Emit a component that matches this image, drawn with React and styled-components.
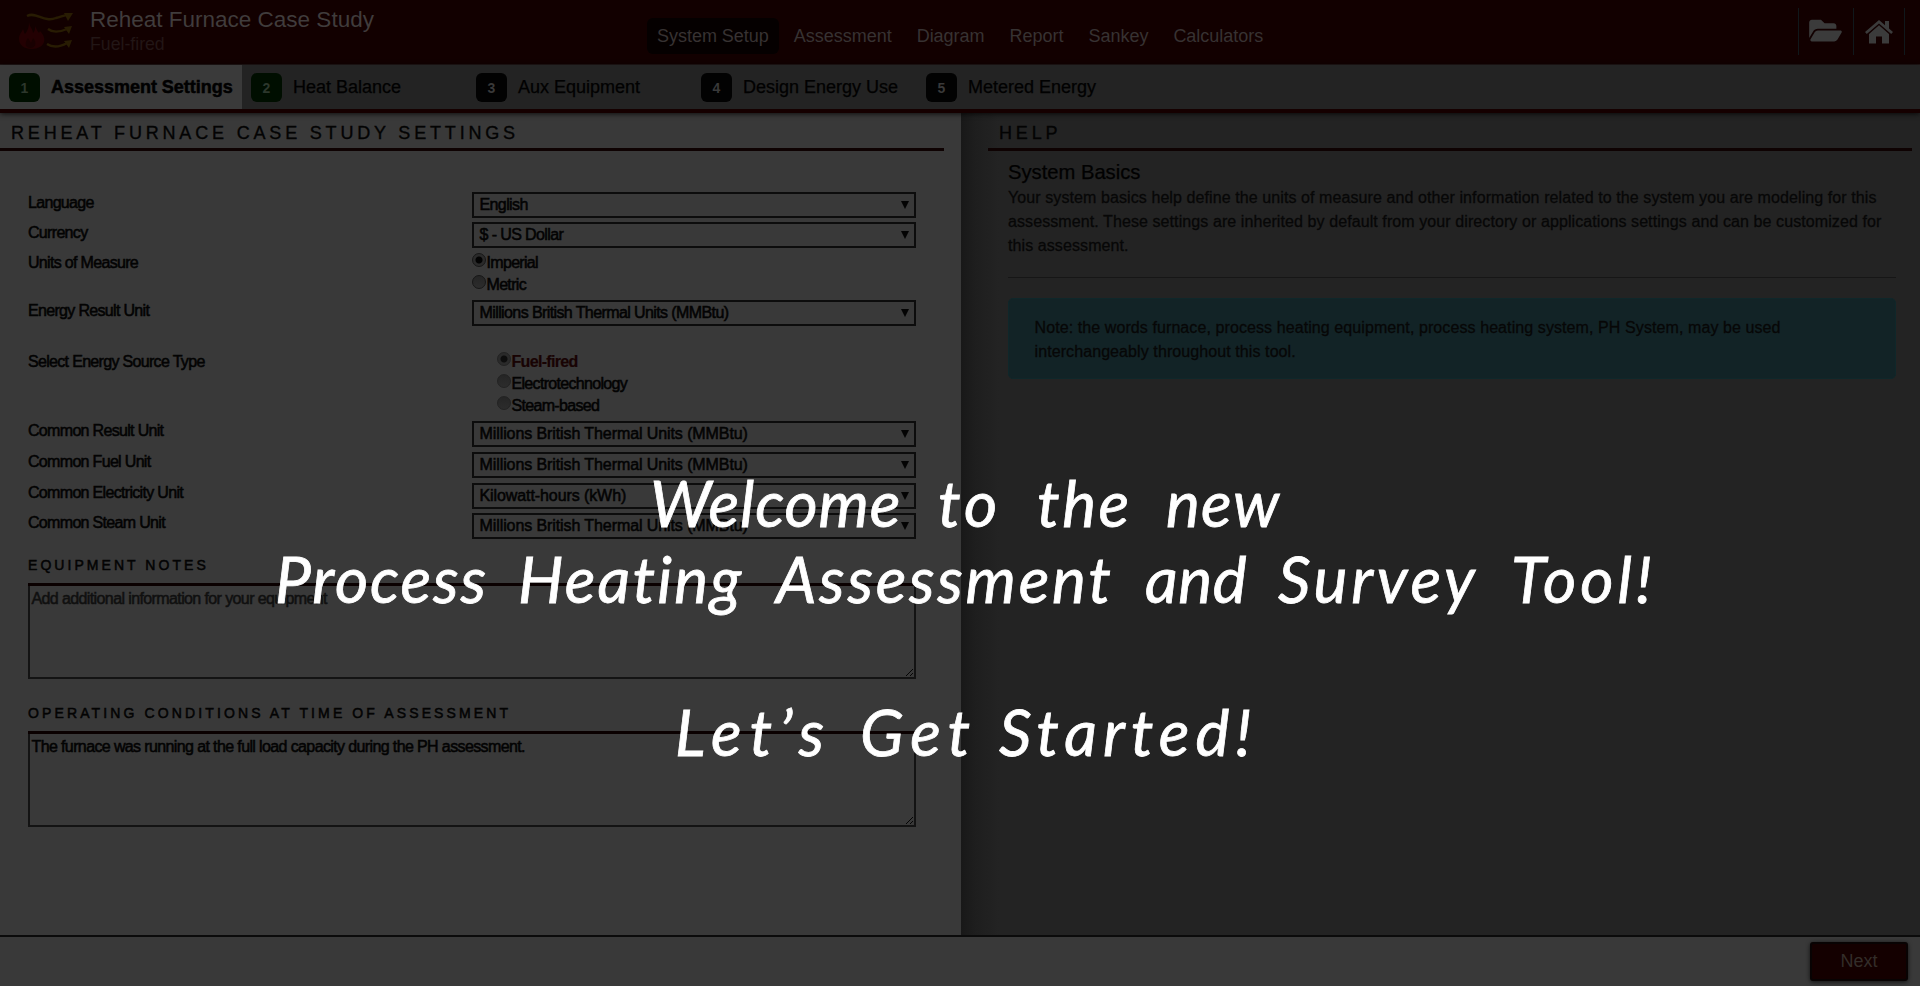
import React from "react";
import styled, { createGlobalStyle, css } from "styled-components";
import { FaFolderOpen } from "react-icons/fa";

const Global = createGlobalStyle`
  * { box-sizing: border-box; }
  body { margin: 0; background: #393939; font-family: "Liberation Sans", Arial, sans-serif; }
`;

const ink = "#030303";
const maroon = "#120000";

const Page = styled.div`
  position: relative;
  width: 1920px;
  height: 986px;
  display: flex;
  flex-direction: column;
  overflow: hidden;
  background: #393939;
  color: ${ink};
`;

/* ---------- header ---------- */
const Header = styled.header`
  height: 65px;
  flex: none;
  display: grid;
  grid-template-columns: 647px 1fr auto;
  background: ${maroon};
  border-bottom: 1px solid #201616;
`;
const Brand = styled.div`
  display: flex;
  padding-left: 17px;
`;
const Titles = styled.div`
  padding: 7px 0 0 16px;
`;
const Title = styled.div`
  font-size: 22.5px;
  line-height: 25px;
  color: #403c3c;
`;
const Subtitle = styled.div`
  font-size: 17.7px;
  line-height: 24px;
  color: #221616;
`;
const Nav = styled.nav`
  display: flex;
  gap: 5px;
  padding-top: 18px;
`;
const NavItem = styled.a`
  height: 36px;
  padding: 0 10px;
  border-radius: 6px;
  font-size: 18px;
  line-height: 37px;
  letter-spacing: -0.02px;
  color: #373232;
  background: ${(p) => (p.$on ? "#050000" : "transparent")};
`;
const HeaderTools = styled.div`
  display: flex;
  height: 47px;
  margin: 8px 15px 0 0;
`;
const Tool = styled.div`
  width: ${(p) => p.$w}px;
  border-left: 1px solid #10181b;
  display: flex;
  justify-content: center;
  padding: ${(p) => p.$top}px 2px 0 0;
  color: #3b3b3b;
  &:last-child { border-right: 1px solid #10181b; padding-right: 0; }
`;

/* ---------- step tabs ---------- */
const Steps = styled.div`
  position: relative;
  height: 48px;
  flex: none;
  display: flex;
  background: #232323;
  border-bottom: 4px solid #150000;
  box-shadow: 0 1px 5px rgba(0, 0, 0, 0.75);
`;
const Step = styled.div`
  width: ${(p) => (p.$on ? 242 : 225)}px;
  display: flex;
  align-items: center;
  gap: 11px;
  padding: 1px 0 0 9px;
  white-space: nowrap;
  font-size: 18px;
  font-weight: ${(p) => (p.$on ? 700 : 400)};
  letter-spacing: ${(p) => (p.$on ? "-0.02px" : 0)};
  color: #010101;
  -webkit-text-stroke: ${(p) => (p.$on ? 0.5 : 0.25)}px #010101;
  background: ${(p) => (p.$on ? "#3a3a3a" : "transparent")};
`;
const Badge = styled.span`
  width: 31px;
  height: 29px;
  flex: none;
  border-radius: 6px;
  display: grid;
  place-items: center;
  font-size: 14px;
  font-weight: 700;
  -webkit-text-stroke: 0;
  color: ${(p) => (p.$done ? "#2c372c" : "#393939")};
  background: ${(p) => (p.$done ? "#000e00" : "#020202")};
`;

/* ---------- body ---------- */
const Body = styled.main`
  flex: 1;
  display: grid;
  grid-template-columns: 961px 1fr;
`;
const Settings = styled.section`
  background: #393939;
`;
const Help = styled.aside`
  padding-left: 27px;
  background: linear-gradient(90deg, #181818 0, #1e1e1e 14px, #232323 38px);
`;
const PanelTitle = styled.h2`
  margin: 0 ${(p) => p.$right}px 0 0;
  height: 38px;
  padding: 10px 0 0 11px;
  border-bottom: 3px solid #0e0202;
  font-size: 18px;
  line-height: 21px;
  font-weight: 400;
  letter-spacing: 3.82px;
  color: ${ink};
  -webkit-text-stroke: 0.35px ${ink};
  white-space: nowrap;
`;
const Form = styled.div`
  padding: 41px 0 0 28px;
`;
const Row = styled.div`
  display: grid;
  grid-template-columns: 444px 444px;
  height: ${(p) => p.$h}px;
`;
const crisp = css`
  font-size: 16px;
  -webkit-text-stroke: 0.55px ${ink};
`;
const Label = styled.label`
  ${crisp}
  line-height: 18px;
  padding-top: ${(p) => p.$top || 2}px;
  letter-spacing: -0.68px;
`;
const Select = styled.div`
  ${crisp}
  height: 26px;
  border: 2px solid #0c0c0c;
  display: flex;
  align-items: center;
  justify-content: space-between;
  padding: 0 5px ${(p) => (p.$loose ? 0 : 1)}px 5.5px;
  letter-spacing: ${(p) => (p.$loose ? "-0.09px" : "-0.6px")};
`;
const Arrow = styled.i`
  border: solid transparent;
  border-width: 8px 4px 0;
  border-top-color: #030303;
`;
const Options = styled.div`
  padding-left: ${(p) => p.$indent || 0}px;
  padding-top: ${(p) => p.$top || 0}px;
`;
const Option = styled.div`
  ${crisp}
  height: 21.8px;
  display: flex;
  gap: 0.5px;
  line-height: 21px;
  letter-spacing: -0.68px;
  font-weight: ${(p) => (p.$hot ? 700 : 400)};
  color: ${(p) => (p.$hot ? "#180303" : ink)};
  -webkit-text-stroke: ${(p) => (p.$hot ? "0.2px #180303" : `0.55px ${ink}`)};
`;
const Dot = styled.span`
  width: 14px;
  height: 14px;
  margin-top: 1px;
  flex: none;
  border-radius: 50%;
  border: 1px solid ${(p) => (p.$dim ? "#222" : "#161616")};
  background: ${(p) =>
    p.$checked
      ? `radial-gradient(circle, ${p.$dim ? "#0d0d0d" : "#020202"} 0 3px, #2a2a2a 4px)`
      : "linear-gradient(#252525, #2c2c2c)"};
`;
const NoteTitle = styled.h3`
  margin: 0 0 0 28px;
  padding-top: ${(p) => p.$top}px;
  width: 888px;
  border-bottom: 3px solid #0a0000;
  font-size: 14px;
  line-height: 16px;
  padding-bottom: 10px;
  font-weight: 400;
  letter-spacing: ${(p) => p.$ls}px;
  -webkit-text-stroke: 0.5px ${ink};
`;
const NoteBox = styled.div`
  ${crisp}
  position: relative;
  width: 888px;
  height: 93px;
  margin-left: 28px;
  border: 1px solid #131313;
  border-width: 0 2px 2px;
  padding: 4px 0 0 1.5px;
  line-height: 18px;
  letter-spacing: ${(p) => p.$ls}px;
  color: ${(p) => (p.$hint ? "#101010" : ink)};
  -webkit-text-stroke-color: ${(p) => (p.$hint ? "#101010" : ink)};
`;
const Grip = styled.svg`
  position: absolute;
  right: 0;
  bottom: 0;
`;

/* ---------- help ---------- */
const HelpBody = styled.div`
  margin: 0 24px 0 20px;
`;
const HelpTitle = styled.h3`
  margin: 0;
  padding-top: 9px;
  font-size: 20.2px;
  line-height: 25px;
  height: 35px;
  font-weight: 400;
  color: #010101;
  -webkit-text-stroke: 0.25px #010101;
`;
const Copy = styled.p`
  margin: 0;
  font-size: 16px;
  line-height: 24px;
  letter-spacing: 0.09px;
  color: #070707;
  -webkit-text-stroke: 0.3px #070707;
  white-space: nowrap;
`;
const Divider = styled.hr`
  margin: 19px 0 20px;
  border: 0;
  border-top: 1px solid #161616;
`;
const Note = styled.div`
  height: 81px;
  padding: 17px 25.5px;
  border: 1px solid #0f272a;
  border-radius: 5px;
  background: #122326;
`;

/* ---------- footer ---------- */
const Footer = styled.footer`
  height: 51px;
  flex: none;
  display: flex;
  justify-content: flex-end;
  padding: 5px 12px 0 0;
  border-top: 2px solid #0b0b0b;
  background: #393939;
`;
const NextButton = styled.button`
  width: 98px;
  height: 39px;
  padding: 0;
  border: 2px solid #080303;
  border-radius: 3px;
  background: #140000;
  color: #332d29;
  font: 18px "Liberation Sans", sans-serif;
  box-shadow: 0 1px 4px rgba(0, 0, 0, 0.7);
`;

/* ---------- welcome message ---------- */
const Welcome = styled.div`
  position: absolute;
  inset: 0;
  padding-top: 465px;
  color: #fff;
  font: italic 400 64px/76px Lato, "Open Sans", sans-serif;
  font-variant-ligatures: none;
  -webkit-text-stroke: 0.8px #fff;
`;
const Line = styled.div`
  display: flex;
  height: ${(p) => p.$h}px;
  padding-left: ${(p) => p.$x}px;
  white-space: nowrap;
`;
const Word = styled.span`
  width: ${(p) => p.$w}px;
  flex: none;
  letter-spacing: ${(p) => p.$ls || 0}px;
`;

const Logo = () => (
  <svg width="57" height="56" viewBox="17 0 57 56" fill="none">
    <path d="M29 22c1 6 4 7 4 11 2-2 2-4 2-7 2 4 3 6 4 7l1-2c4 4 5 8 4 11-1 4-6 7-12 7-8 0-13-4-13-10 0-5 3-7 4-10 1 2 1 4 2 5 3-4 4-7 4-12z" fill="#230002" />
    <path d="M28 38c1 2 2 3 3 5l2-5c3 3 4 9-2 10-7 0-6-6-3-10z" fill="#190001" />
    <g stroke="#281c03" strokeWidth="2.4">
      <path d="M27 16c9-5 17 7 29 2 5-1 8-3 12-3" />
      <path d="M48 29c5 4 12 3 19 0" />
      <path d="M47 44c6 4 13 3 20-1" />
    </g>
    <g fill="#281c03">
      <path d="M64 13l9 0-5 8z" />
      <path d="M64 27l8-1-3 8z" />
      <path d="M64 41l8-1-3 8z" />
    </g>
  </svg>
);

const Home = () => (
  <svg width="28" height="24" viewBox="0 0 28 24" fill="currentColor">
    <path d="M14 0L0 12l1.8 2L14 3.5 26.2 14l1.8-2-4-3.5V1h-4v4.2z" />
    <path d="M14 5.3L4 14v9.5h7v-7h6v7h7V14z" />
  </svg>
);

const navItems = ["System Setup", "Assessment", "Diagram", "Report", "Sankey", "Calculators"];
const steps = ["Assessment Settings", "Heat Balance", "Aux Equipment", "Design Energy Use", "Metered Energy"];
const mmbtu = "Millions British Thermal Units (MMBtu)";
const commonUnits = [
  ["Common Result Unit", mmbtu],
  ["Common Fuel Unit", mmbtu],
  ["Common Electricity Unit", "Kilowatt-hours (kWh)"],
  ["Common Steam Unit", mmbtu],
];

const Picker = ({ children, loose }) => (
  <Select $loose={loose}>
    {children}
    <Arrow />
  </Select>
);

const Notes = ({ children, ...rest }) => (
  <NoteBox {...rest}>
    {children}
    <Grip width="9" height="9" viewBox="0 0 9 9" stroke="#050505">
      <path d="M1 8L8 1M5 8L8 5" />
    </Grip>
  </NoteBox>
);

/* each word: text, advance to the next word, letter spacing */
const messages = [
  { x: 650, h: 76, words: [["Welcome", 288, 0.8], ["to", 99, 4], ["the", 129, 2.5], ["new", 120, 1.2]] },
  { x: 275, h: 153, words: [["Process", 243, 1.9], ["Heating", 258, 2.2], ["Assessment", 369, 2.7], ["and", 133, 0.6], ["Survey", 233, 3.7], ["Tool!", 150, 4]] },
  { x: 675, h: 76, words: [["Let’s", 185, 8], ["Get", 139, 7], ["Started!", 300, 6]] },
];

export default function App() {
  return (
    <Page>
      <Global />
      <Header>
        <Brand>
          <Logo />
          <Titles>
            <Title>Reheat Furnace Case Study</Title>
            <Subtitle>Fuel-fired</Subtitle>
          </Titles>
        </Brand>
        <Nav>
          {navItems.map((n, i) => (
            <NavItem key={n} $on={i === 0}>{n}</NavItem>
          ))}
        </Nav>
        <HeaderTools>
          <Tool $w={55} $top={8}><FaFolderOpen size={33} style={{ height: 29 }} /></Tool>
          <Tool $w={52} $top={12}><Home /></Tool>
        </HeaderTools>
      </Header>

      <Steps>
        {steps.map((s, i) => (
          <Step key={s} $on={i === 0}>
            <Badge $done={i < 2}>{i + 1}</Badge>
            {s}
          </Step>
        ))}
      </Steps>

      <Body>
        <Settings>
          <PanelTitle $right={17}>REHEAT FURNACE CASE STUDY SETTINGS</PanelTitle>
          <Form>
            <Row $h={30}><Label>Language</Label><Picker>English</Picker></Row>
            <Row $h={30}><Label>Currency</Label><Picker>$ - US Dollar</Picker></Row>
            <Row $h={48}>
              <Label>Units of Measure</Label>
              <Options>
                <Option><Dot $checked />Imperial</Option>
                <Option><Dot />Metric</Option>
              </Options>
            </Row>
            <Row $h={48}><Label>Energy Result Unit</Label><Picker>{mmbtu}</Picker></Row>
            <Row $h={73}>
              <Label $top={5}>Select Energy Source Type</Label>
              <Options $indent={25} $top={3}>
                <Option $hot><Dot $checked $dim />Fuel-fired</Option>
                <Option><Dot $dim />Electrotechnology</Option>
                <Option><Dot $dim />Steam-based</Option>
              </Options>
            </Row>
            {commonUnits.map(([label, unit]) => (
              <Row key={label} $h={30.8}><Label $top={1}>{label}</Label><Picker loose>{unit}</Picker></Row>
            ))}
          </Form>
          <NoteTitle $top={13} $ls={3.05}>EQUIPMENT NOTES</NoteTitle>
          <Notes $hint $ls={-0.61}>Add additional information for your equipment</Notes>
          <NoteTitle $top={26} $ls={3.12}>OPERATING CONDITIONS AT TIME OF ASSESSMENT</NoteTitle>
          <Notes $ls={-0.62}>The furnace was running at the full load capacity during the PH assessment.</Notes>
        </Settings>

        <Help>
          <PanelTitle $right={8}>HELP</PanelTitle>
          <HelpBody>
            <HelpTitle>System Basics</HelpTitle>
            <Copy>
              Your system basics help define the units of measure and other information related to the system you are modeling for this<br />
              assessment. These settings are inherited by default from your directory or applications settings and can be customized for<br />
              this assessment.
            </Copy>
            <Divider />
            <Note>
              <Copy>
                Note: the words furnace, process heating equipment, process heating system, PH System, may be used<br />
                interchangeably throughout this tool.
              </Copy>
            </Note>
          </HelpBody>
        </Help>
      </Body>

      <Footer>
        <NextButton>Next</NextButton>
      </Footer>

      <Welcome>
        {messages.map((m) => (
          <Line key={m.x} $x={m.x} $h={m.h}>
            {m.words.map(([word, w, ls]) => (
              <Word key={word} $w={w} $ls={ls}>{word}</Word>
            ))}
          </Line>
        ))}
      </Welcome>
    </Page>
  );
}
